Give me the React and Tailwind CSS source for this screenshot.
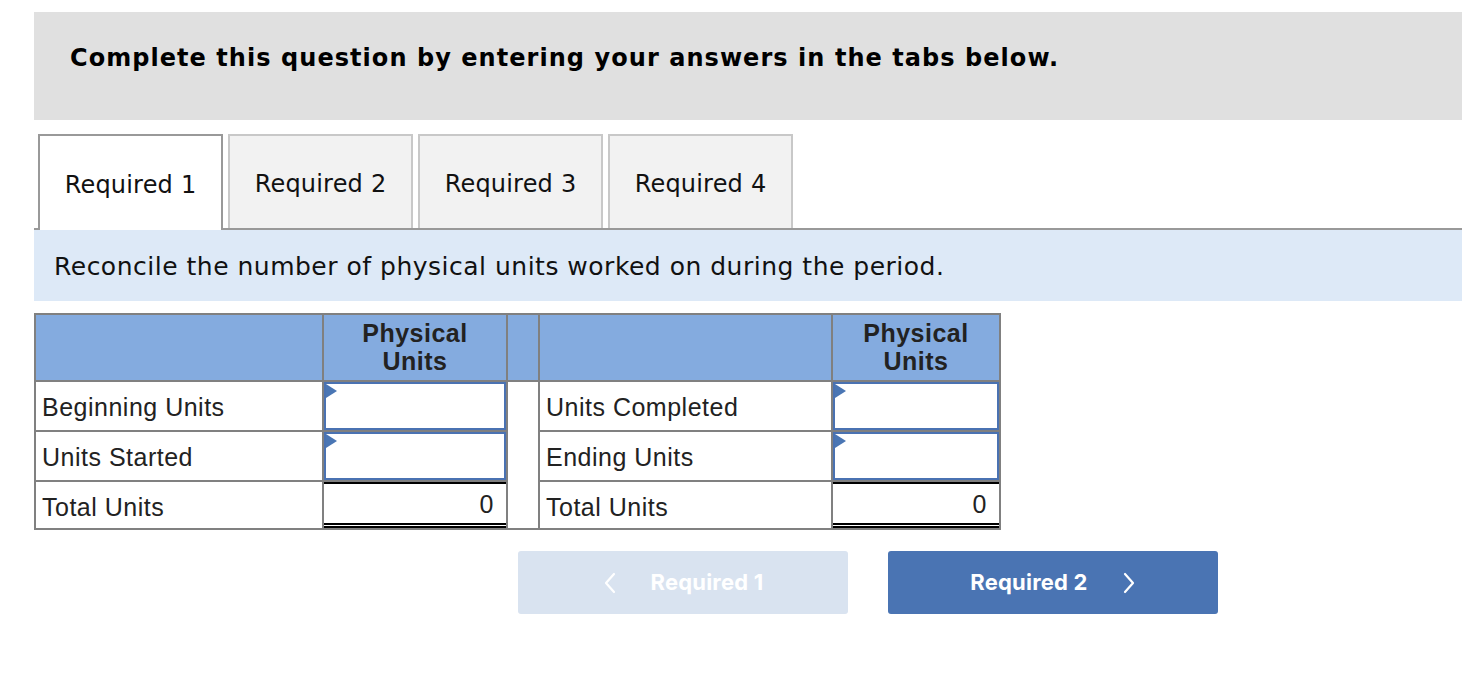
import React from 'react';

const verdana = { fontFamily: '"DejaVu Sans", Verdana, sans-serif' };

function Tab({ label, active }) {
  return (
    <div
      className={
        'w-[185px] flex items-center justify-center pt-[4px] text-[24px] tracking-[0.2px] text-[#111] border-2 border-b-0 ' +
        (active ? 'bg-white border-[#999] -mb-[2px] h-[96px]' : 'bg-[#f2f2f2] border-[#c8c8c8] h-[94px]')
      }
    >
      {label}
    </div>
  );
}

function Marker() {
  return (
    <svg className="absolute left-0 top-0" width="12" height="16" viewBox="0 0 12 16">
      <polygon points="0,0 11,7 0,14" fill="#4a76b4" />
    </svg>
  );
}

function InputCell() {
  return (
    <td className="p-0 border-2 border-[#808080] h-[50px]">
      <div className="relative h-[48px] border-2 border-[#4a72b2] bg-white">
        <Marker />
      </div>
    </td>
  );
}

function TotalCell() {
  return (
    <td className="p-0 border-x-2 border-[#808080] align-top">
      <div className="h-[46px] border-t-2 border-b-[5px] border-double border-x-0 border-black flex items-center justify-end pr-[12px] pt-[2px]">
        0
      </div>
    </td>
  );
}

function Chevron({ dir }) {
  return (
    <svg width="14" height="22" viewBox="0 0 14 22" fill="none">
      <polyline
        points={dir === 'left' ? '11,2 3,11 11,20' : '3,2 11,11 3,20'}
        stroke="white"
        strokeWidth="2.2"
        strokeLinecap="round"
        strokeLinejoin="round"
      />
    </svg>
  );
}

export default function App() {
  const cell = 'border-2 border-[#808080] px-[6px] h-[50px] pt-[3px]';
  const totalLabel = 'border-2 border-[#808080] px-[6px] pt-[3px] leading-[30px]';
  return (
    <div className="bg-white min-h-[674px] pl-[34px] pt-[12px] overflow-hidden" style={verdana}>
      {/* instructions bar */}
      <div className="h-[108px] bg-[#e0e0e0] flex items-center pl-[36px] pb-[16px]">
        <p className="text-[24px] tracking-[1.05px] font-bold text-black whitespace-nowrap">
          Complete this question by entering your answers in the tabs below.
        </p>
      </div>

      {/* tabs */}
      <div className="mt-[14px] flex items-end gap-[5px] pl-[4px] border-b-2 border-[#999]">
        <Tab label="Required 1" active />
        <Tab label="Required 2" />
        <Tab label="Required 3" />
        <Tab label="Required 4" />
      </div>

      <div className="h-[71px] bg-[#dde9f7] flex items-center pl-[20px] pt-[3px]">
        <p className="text-[25px] tracking-[0.5px] text-[#111] whitespace-nowrap">
          Reconcile the number of physical units worked on during the period.
        </p>
      </div>

      {/* reconciliation table */}
      <table
        className="mt-[12px] border-collapse border-2 border-[#808080] text-[25px] tracking-[0.5px] text-[#222] table-fixed"
        style={{ fontFamily: '"Liberation Sans", Arial, sans-serif' }}
      >
        <colgroup>
          <col className="w-[288px]" />
          <col className="w-[184px]" />
          <col className="w-[32px]" />
          <col className="w-[293px]" />
          <col className="w-[168px]" />
        </colgroup>
        <thead>
          <tr className="bg-[#84abdf] h-[67px]">
            <th className="border-2 border-[#808080]"></th>
            <th className="border-2 border-[#808080] font-bold leading-[28px] pb-[2px]">Physical<br />Units</th>
            <th className="border-2 border-[#808080]"></th>
            <th className="border-2 border-[#808080]"></th>
            <th className="border-2 border-[#808080] font-bold leading-[28px] pb-[2px]">Physical<br />Units</th>
          </tr>
        </thead>
        <tbody>
          <tr>
            <td className={cell}>Beginning Units</td>
            <InputCell />
            <td rowSpan={3} className="border-2 border-[#808080]"></td>
            <td className={cell}>Units Completed</td>
            <InputCell />
          </tr>
          <tr>
            <td className={cell}>Units Started</td>
            <InputCell />
            <td className={cell}>Ending Units</td>
            <InputCell />
          </tr>
          <tr>
            <td className={totalLabel}>Total Units</td>
            <TotalCell />
            <td className={totalLabel}>Total Units</td>
            <TotalCell />
          </tr>
        </tbody>
      </table>

      {/* navigation */}
      <div className="mt-[21px] ml-[484px] flex gap-[40px]" style={{ fontFamily: 'Inter, sans-serif' }}>
        <button className="w-[330px] h-[63px] rounded-[3px] bg-[#d9e3f0] flex items-center justify-center gap-[34px] text-white text-[22px] tracking-[0.2px] font-bold">
          <Chevron dir="left" />
          <span>Required 1</span>
        </button>
        <button className="w-[330px] h-[63px] rounded-[3px] bg-[#4a74b3] flex items-center justify-center gap-[34px] text-white text-[22px] tracking-[0.2px] font-bold">
          <span>Required 2</span>
          <Chevron dir="right" />
        </button>
      </div>
    </div>
  );
}
